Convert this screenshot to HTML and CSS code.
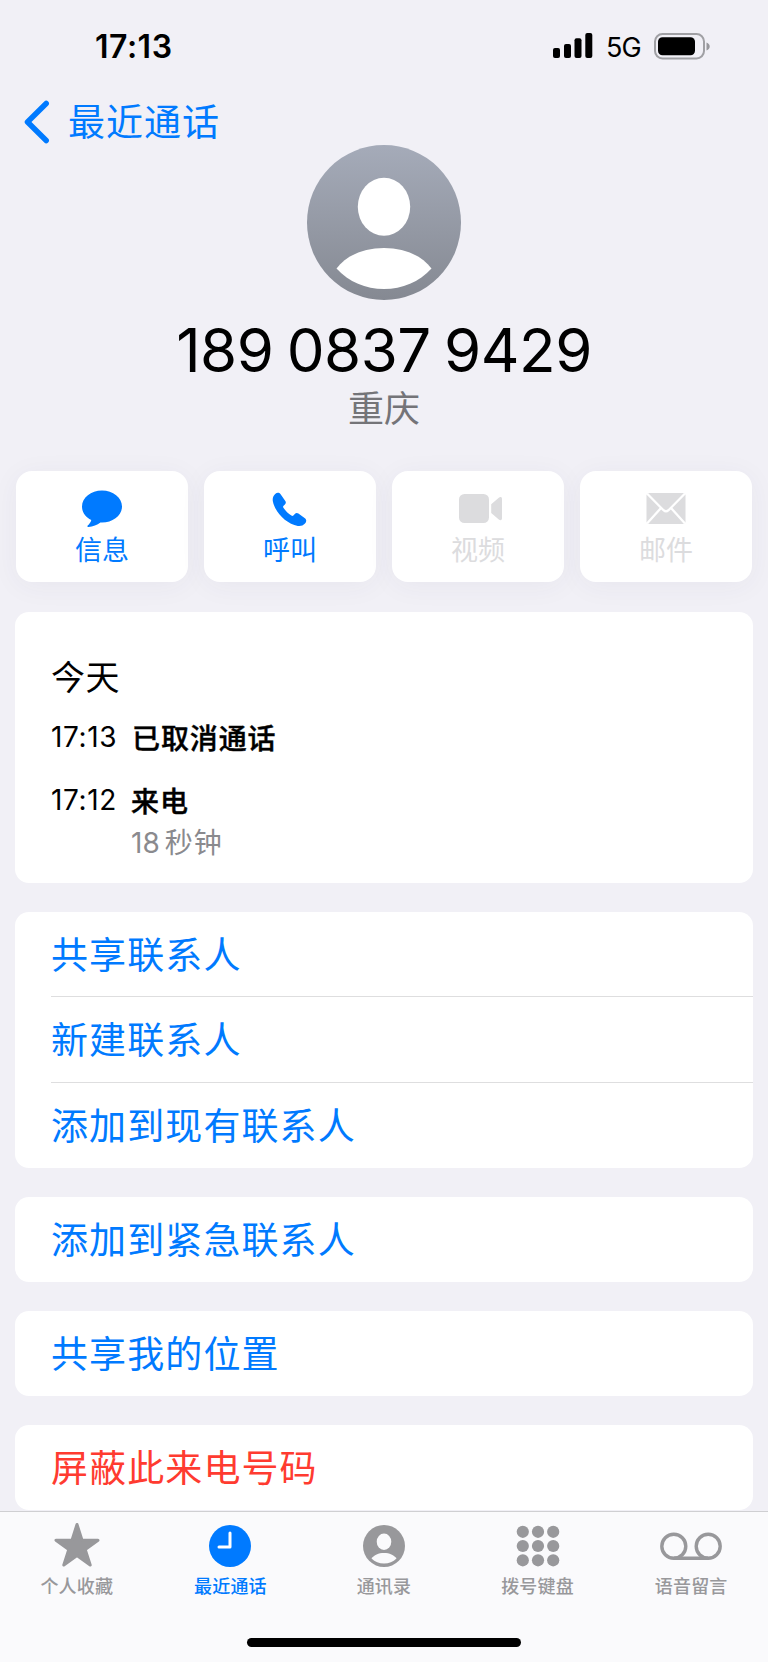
FILE: index.html
```
<!DOCTYPE html>
<html lang="zh-CN">
<head>
  <meta charset="UTF-8">
  <title>最近通话</title>
  <link rel="stylesheet" href="styles.css">
</head>
<body>
<div class="phone">

  <!-- status bar -->
  <header class="status">
    <span class="clock">17:13</span>
    <div class="status-right">
      <svg class="signal" width="40" height="26" viewBox="0 0 40 26">
        <rect x="0" y="15" width="7" height="10" rx="2"/>
        <rect x="11" y="11" width="7" height="14" rx="2"/>
        <rect x="21.5" y="5.3" width="7" height="19.7" rx="2"/>
        <rect x="32.3" y="0" width="7" height="25" rx="2"/>
      </svg>
      <span class="network">5G</span>
      <svg class="battery" width="57" height="27" viewBox="0 0 57 27">
        <rect x="1" y="1" width="49" height="24.4" rx="7.5" fill="none" stroke="#a0a0a4" stroke-width="2"/>
        <rect x="4" y="4.2" width="37" height="18" rx="4.5"/>
        <path d="M52.5 9.5c4.3 1.500 4.300 6.500 0 8z" fill="#98989c"/>
      </svg>
    </div>
  </header>

  <nav class="back">
    <svg width="26" height="44" viewBox="0 0 26 44">
      <path d="M22.200 3.500L3.500 22l18.700 18.500" fill="none" stroke="#007aff" stroke-width="5.500" stroke-linecap="round" stroke-linejoin="round"/>
    </svg>
    <span>最近通话</span>
  </nav>

  <section class="profile">
    <svg class="avatar" width="154" height="155" viewBox="0 0 154 155">
      <defs>
        <linearGradient id="avatarBg" x1="0" y1="0" x2="0" y2="1">
          <stop offset="0" stop-color="#a5abb9"/>
          <stop offset="1" stop-color="#858992"/>
        </linearGradient>
      </defs>
      <ellipse cx="77" cy="77.500" rx="77" ry="77.500" fill="url(#avatarBg)"/>
      <ellipse cx="77" cy="61.800" rx="26.200" ry="29" fill="#fff"/>
      <path d="M29.500 123.500C39 110.500 57 103 77 103s38 7.500 47.500 20.500C112 137 95.500 144 77 144s-35-7-47.500-20.500z" fill="#fff"/>
    </svg>
    <h1>189 0837 9429</h1>
    <p>重庆</p>
  </section>

  <section class="actions">
    <button class="action">
      <svg width="44" height="38" viewBox="0 0 44 38">
        <path d="M22 .5C11 .5 2 7.500 2 16.500c0 5.800 3.600 10.800 9.300 13.500-.6 2.300-2 4.200-3.600 5.500-.8.800-.3 1.500.8 1.400 4.400-.3 8.700-2.200 11.900-4.500l1.600.1c11 0 20-7 20-16S33 .5 22 .5z"/>
      </svg>
      <span>信息</span>
    </button>
    <button class="action">
      <svg width="44" height="38" viewBox="0 0 44 38">
        <path d="M7.200 4.100C8.800 2.500 11 2.200 12.600 4.200l4.700 6.800c.9 1.300.6 2.500-.4 3.500l-1.300 1.300c-.7.700-.6 1.300-.2 2 1.900 2.900 5 5.900 8 7.800.7.400 1.400.4 2-.2l1.400-1.400c1-1 2.300-1.300 3.600-.4l6.500 4.600c1.900 1.400 1.600 3.700.1 5.300-1.900 2.100-4.300 2.800-7.200 2.400C18.500 34 7.200 22.500 4.900 11.500c-.6-2.900.2-5.500 2.300-7.400z"/>
      </svg>
      <span>呼叫</span>
    </button>
    <button class="action off">
      <svg width="44" height="38" viewBox="-2 0 44 38" overflow="visible">
        <rect x="1" y="4" width="30" height="29" rx="5.500"/>
        <path d="M33.200 14.200l7.600-6.400c1.500-1.300 3.200-.8 3.200 1.200v19.300c0 2-1.700 2.500-3.200 1.200l-7.600-6.400z"/>
      </svg>
      <span>视频</span>
    </button>
    <button class="action off">
      <svg width="44" height="38" viewBox="0 0 44 38">
        <rect x="2.500" y="3" width="39" height="31" rx="2.500"/>
        <path d="M3 3.500l16.500 16.700q2.500 2.300 5 0L41 3.500M3 33.500l14-15.500M41 33.500L27 18" fill="none" stroke="#fff" stroke-width="2.300"/>
      </svg>
      <span>邮件</span>
    </button>
  </section>

  <main class="cards">
    <section class="card log">
      <h2>今天</h2>
      <div class="call">
        <time>17:13</time>
        <b>已取消通话</b>
      </div>
      <div class="call second">
        <time>17:12</time>
        <b>来电</b>
      </div>
      <div class="duration"><i>18</i>秒钟</div>
    </section>

    <section class="card">
      <a class="row">共享联系人</a>
      <a class="row">新建联系人</a>
      <a class="row">添加到现有联系人</a>
    </section>
    <section class="card">
      <a class="row">添加到紧急联系人</a>
    </section>
    <section class="card">
      <a class="row">共享我的位置</a>
    </section>
    <section class="card">
      <a class="row danger">屏蔽此来电号码</a>
    </section>
  </main>

  <footer class="tabbar">
    <div class="tabs">
      <a class="tab">
        <svg width="62" height="46" viewBox="0 0 62 46">
          <path d="M31 2.500l5 15.700h16L39.200 27.500l5 15.500L31 33.500 17.800 43l5-15.500L10 18.200h16z" stroke="#98989b" stroke-width="3" stroke-linejoin="round"/>
        </svg>
        <span>个人收藏</span>
      </a>
      <a class="tab active">
        <svg width="62" height="46" viewBox="0 0 62 46">
          <circle cx="31" cy="24" r="21"/>
          <path d="M31 11v14H20" fill="none" stroke="#fff" stroke-width="3" stroke-linecap="round" stroke-linejoin="round"/>
        </svg>
        <span>最近通话</span>
      </a>
      <a class="tab">
        <svg width="62" height="46" viewBox="0 0 62 46">
          <circle cx="31" cy="24" r="21"/>
          <ellipse cx="31" cy="19.800" rx="7.300" ry="8.200" fill="#fafafc"/>
          <path d="M18.500 36.500C21 33 25.500 31 31 31s10 2 12.500 5.500C40 39.800 36 41.500 31 41.500s-9-1.700-12.500-5z" fill="#fafafc"/>
        </svg>
        <span>通讯录</span>
      </a>
      <a class="tab">
        <svg width="62" height="46" viewBox="0 0 62 46">
          <circle cx="15.800" cy="9.800" r="6.100"/><circle cx="31" cy="9.800" r="6.100"/><circle cx="46.200" cy="9.800" r="6.100"/>
          <circle cx="15.800" cy="24" r="6.100"/><circle cx="31" cy="24" r="6.100"/><circle cx="46.200" cy="24" r="6.100"/>
          <circle cx="15.800" cy="38.300" r="6.100"/><circle cx="31" cy="38.300" r="6.100"/><circle cx="46.200" cy="38.300" r="6.100"/>
        </svg>
        <span>拨号键盘</span>
      </a>
      <a class="tab">
        <svg width="62" height="46" viewBox="0 0 62 46">
          <g fill="none" stroke="#98989b" stroke-width="3.400">
            <circle cx="13.800" cy="24.200" r="12"/>
            <circle cx="48.200" cy="24.200" r="12"/>
            <path d="M13.800 36.200h34.400"/>
          </g>
        </svg>
        <span>语音留言</span>
      </a>
    </div>
    <div class="home-bar"></div>
  </footer>

</div>
</body>
</html>
```
FILE: styles.css
```
* { box-sizing: border-box; margin: 0; padding: 0; }
body {
  background: #f1f0f6;
  color: #000;
  font-family: "Noto Sans CJK SC", sans-serif;
}
.phone {
  width: 768px; height: 1662px;
  display: flex; flex-direction: column;
  overflow: hidden;
}
svg { display: block; flex: none; }

/* status bar */
.status {
  height: 92px; padding: 0 57px 0 95px;
  display: flex; justify-content: space-between; align-items: center;
  font-family: Inter, sans-serif;
}
.clock { font-size: 32px; font-weight: 600; letter-spacing: 0.5px; }
.status-right { display: flex; align-items: center; }
.network { font-size: 27px; font-weight: 400; width: 35px; margin: 2px 13px 0 13px; letter-spacing: -1px; }

.back {
  height: 53px; padding-left: 24px;
  display: flex; align-items: center; gap: 18px;
  color: #007aff; font-size: 37px; letter-spacing: 1px; line-height: 52px;
}
.back svg { margin-top: 6px; }
.back span { padding-top: 2px; }

/* avatar and number */
.profile { height: 326px; text-align: center; }
.avatar { margin: 0 auto; }
.profile h1 {
  font: 400 60px/70px Inter, sans-serif;
  letter-spacing: -0.5px; word-spacing: -3px; margin-top: 15px;
}
.profile p { font-size: 36px; line-height: 42px; color: #747478; }

/* quick actions */
.actions {
  display: grid; grid-template-columns: repeat(4, 1fr); gap: 16px;
  padding: 0 16px; height: 111px;
}
.action {
  border: 0; border-radius: 16px; background: #fff;
  display: flex; flex-direction: column; align-items: center;
  padding-top: 19px;
  box-shadow: 0 4px 28px rgba(60, 50, 90, 0.05);
  font-family: inherit; font-size: 27px; line-height: 41px;
  color: #007aff; fill: #007aff;
}
.action.off { color: #dcdcde; fill: #dcdcde; }

/* cards */
.cards { display: flex; flex-direction: column; gap: 28.5px; padding: 30px 15px 0; flex: none; height: 929px; }
.card { background: #fff; border-radius: 14px; padding-left: 36px; flex: none; }
.log { height: 271px; padding-top: 41px; }
.log h2 { font-size: 34px; font-weight: 400; line-height: 46px; letter-spacing: 0.5px; }
.call { display: flex; align-items: center; height: 40px; margin-top: 18px; }
.call time { font: 400 28px/40px Inter, sans-serif; width: 81px; letter-spacing: 0.6px; }
.call b { font-size: 28px; font-weight: 500; letter-spacing: 0.9px; line-height: 40px; -webkit-text-stroke: 0.4px #000; }
.call.second { margin-top: 23px; }
.call.second time { width: 80px; }
.duration { margin-left: 80px; font-size: 28px; line-height: 42px; color: #8a8a8e; letter-spacing: 1px; }
.duration i { font-family: Inter, sans-serif; font-style: normal; letter-spacing: 0; margin-right: 5px; }
.row {
  display: flex; align-items: center; height: 85.5px; padding-bottom: 2px;
  font-size: 37px; letter-spacing: 1.1px;
  color: #007aff;
}
.row:not(:last-child) { border-bottom: 1.5px solid #dededf; }
.row.danger { color: #ff3b30; }

/* tab bar */
.tabbar { flex: none; height: 151px; background: #fafafc; border-top: 1.5px solid #cfcfd2; }
.tabs { display: flex; padding-top: 10px; height: 126px; }
.tab {
  flex: 1; display: flex; flex-direction: column; align-items: center;
  font-size: 18px; font-weight: 500; line-height: 26px; letter-spacing: 0.2px;
  color: #98989b; fill: #98989b;
}
.tab span { margin-top: 4px; }
.tab.active { color: #007aff; fill: #007aff; }
.home-bar { width: 274px; height: 9px; border-radius: 5px; background: #000; margin: 0 auto; }
```
